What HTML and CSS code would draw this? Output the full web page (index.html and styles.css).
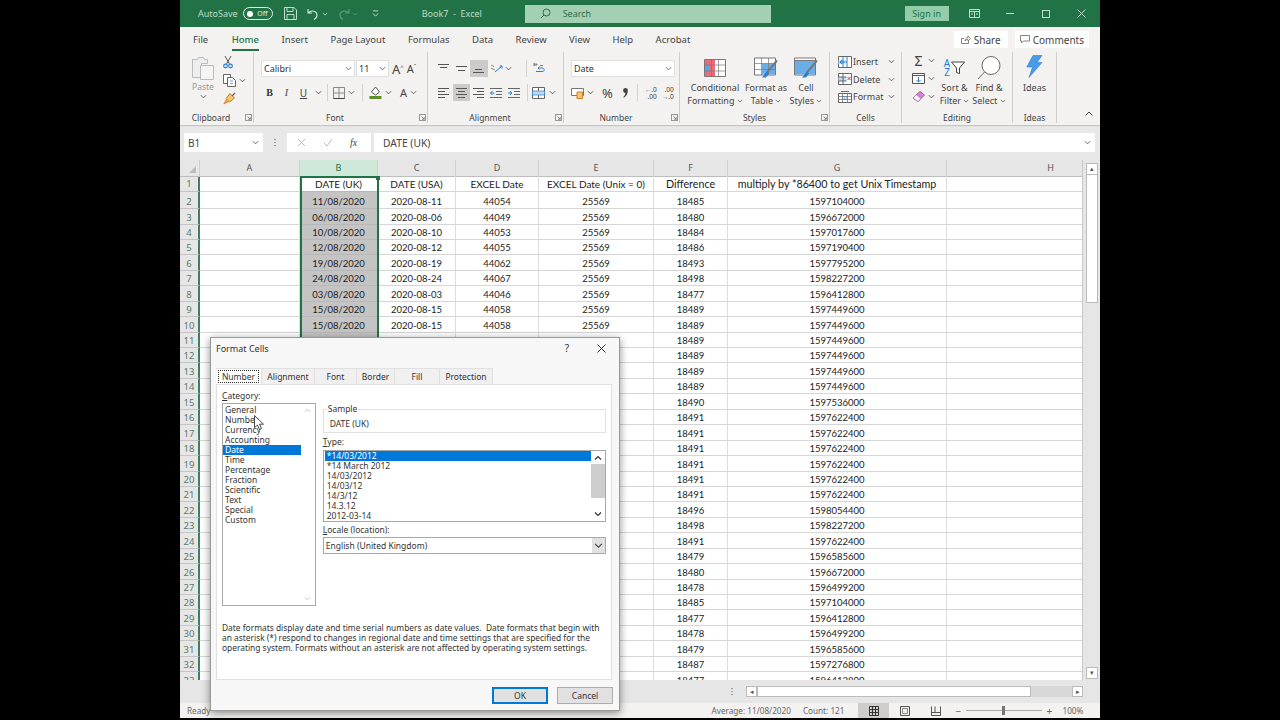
FILE: index.html
```html
<!DOCTYPE html>
<html lang="en">
  <head>
    <meta charset="UTF-8" />
    <title>Book7 - Excel</title>
    <link rel="stylesheet" href="styles.css">
  </head>
  <body>
    <svg class="defs">
      <symbol id="chev" viewBox="0 0 8 8"><path d="M1 2.500 4 5.500 7 2.500" fill="none" stroke="#555" stroke-width="1"/></symbol>
      <symbol id="launch" viewBox="0 0 8 8"><path d="M.5.500h7v7h-7z M3 3l3 3M6 3.500V6H3.500" fill="none" stroke="#666" stroke-width=".8"/></symbol>
    </svg>

    <div class="app">
      <!-- Title bar -->
      <div class="titlebar">
        <span class="autosave">AutoSave</span>
        <span class="toggle"><i></i>Off</span>
        <svg class="qa-save" width="13" height="13" viewBox="0 0 13 13"><path d="M.5.500h9.500l2.500 2.500v9.500h-12zM3 .5v4h6v-4M3 12.500v-5h7v5" fill="none" stroke="#bfe0cc"/></svg>
        <svg class="qa-undo" width="12" height="12" viewBox="0 0 12 12"><path d="M1 1v4h4M1 5c3-3.500 9-2 9 2 0 2-1 3.500-3 4.500" fill="none" stroke="#d4e9dc" stroke-width="1.100"/></svg>
        <svg class="qa-chev" width="6" height="6" viewBox="0 0 8 8"><path d="M1 2.500 4 5.500 7 2.500" fill="none" stroke="#d4e9dc"/></svg>
        <svg class="qa-redo" width="12" height="12" viewBox="0 0 12 12"><path d="M11 1v4h-4M11 5c-3-3.500-9-2-9 2 0 2 1 3.500 3 4.500" fill="none" stroke="#5f9c7b" stroke-width="1.100"/></svg>
        <svg class="qa-chev2" width="6" height="6" viewBox="0 0 8 8"><path d="M1 2.500 4 5.500 7 2.500" fill="none" stroke="#5f9c7b"/></svg>
        <svg class="qa-custom" width="7" height="7" viewBox="0 0 8 8"><path d="M1 1h6M1 4 4 7 7 4" fill="none" stroke="#d4e9dc"/></svg>
        <span class="doc-title">Book7 &nbsp;-&nbsp; Excel</span>
        <div class="search">
          <svg width="11" height="11" viewBox="0 0 11 11"><circle cx="6.500" cy="4.500" r="3.500" fill="none" stroke="#2c6e4b"/><path d="M4 7 1 10" stroke="#2c6e4b"/></svg>
          <span>Search</span>
        </div>
        <span class="signin">Sign in</span>
        <svg class="win-ribbon" width="11" height="9" viewBox="0 0 11 9"><path d="M.5.500h10v8h-10zM.5 2.500h10M5.500 2.500v6M2 5h2M7 5h2" fill="none" stroke="#bfe0cc"/></svg>
        <span class="win-min"></span>
        <span class="win-max"></span>
        <svg class="win-close" width="9" height="9" viewBox="0 0 9 9"><path d="M.5.500l8 8M8.500.500l-8 8" stroke="#bfe0cc"/></svg>
      </div>

      <!-- Ribbon tabs -->
      <div class="tabs">
        <span class="tab-file">File</span>
        <span class="tab-on">Home</span>
        <span>Insert</span>
        <span>Page Layout</span>
        <span>Formulas</span>
        <span>Data</span>
        <span>Review</span>
        <span>View</span>
        <span>Help</span>
        <span>Acrobat</span>
        <div class="tab-actions">
          <span class="share">
            <svg width="10" height="9" viewBox="0 0 10 9"><path d="M3 3.500H.5v5h7V6M4 6c0-2 1.500-3.500 3-3.500V1l2.500 2.500L7 6V4.500C5.500 4.500 4.500 5 4 6z" fill="none" stroke="#666" stroke-width=".8"/></svg>
            Share
          </span>
          <span class="comments">
            <svg width="10" height="9" viewBox="0 0 10 9"><path d="M.5.500h9v5.500h-6l-2 2v-2h-1z" fill="none" stroke="#666" stroke-width=".8"/></svg>
            Comments
          </span>
        </div>
      </div>

      <!-- Ribbon -->
      <div class="ribbon">
        <div class="group g-clip">
          <div class="group-body clip-body">
            <div class="paste">
              <svg width="24" height="25" viewBox="0 0 24 25"><path d="M1.500 4.500h5l1-2h5l1 2h3v4h-6v14h-9z" fill="#eee" stroke="#bbb"/><path d="M9.500 10.500h13v14h-13z" fill="#f4f4f4" stroke="#bbb"/></svg>
              <span>Paste</span>
              <svg class="caret" width="7" height="7"><use href="#chev"/></svg>
            </div>
            <div class="clip-tools">
              <svg width="10" height="14" viewBox="0 0 10 14"><path d="M2 1l4.500 8M8 1 3.500 9" stroke="#555"/><circle cx="2.500" cy="11" r="1.800" fill="none" stroke="#2b7cd3" stroke-width="1.200"/><circle cx="7.500" cy="11" r="1.800" fill="none" stroke="#2b7cd3" stroke-width="1.200"/></svg>
              <div class="tool-line">
                <svg width="13" height="13" viewBox="0 0 13 13"><path d="M.5.500h7v9h-7z" fill="#fff" stroke="#666"/><path d="M4.500 3.500h5l3 3v6h-8z" fill="#fff" stroke="#666"/><path d="M7 7h3M7 9.500h3" stroke="#2b7cd3" stroke-width=".7"/></svg>
                <svg class="caret" width="7" height="7"><use href="#chev"/></svg>
              </div>
              <svg width="13" height="13" viewBox="0 0 13 13"><path d="M7 1.500 11.500 6 6.500 10 3 6.500z" fill="#f6c667" stroke="#d27a1d"/><path d="M3.500 7 .8 12l5-2.500" fill="#f3a63b" stroke="#d27a1d" stroke-width=".7"/><path d="M9 4l3-3" stroke="#666" stroke-width="1.300"/></svg>
            </div>
          </div>
          <div class="group-foot"><span></span><span>Clipboard</span><svg class="launch" width="7" height="7"><use href="#launch"/></svg></div>
        </div>

        <div class="group g-font">
          <div class="group-body">
            <div class="rrow">
              <span class="field f-name">Calibri<svg width="7" height="7"><use href="#chev"/></svg></span>
              <span class="field f-size">11<svg width="7" height="7"><use href="#chev"/></svg></span>
              <span class="grow-a">A<sup>^</sup></span>
              <span class="shrink-a">A<sup>ˇ</sup></span>
            </div>
            <div class="rrow row2 font-row2">
              <b class="t-b">B</b>
              <i class="t-i">I</i>
              <u class="t-u">U</u>
              <svg class="caret" width="7" height="7"><use href="#chev"/></svg>
              <span class="vsep"></span>
              <svg width="12" height="12" viewBox="0 0 12 12"><path d="M.5.500h11v11h-11zM6 .5v11M.5 6h11" fill="none" stroke="#888"/><path d="M.5 11.500h11" stroke="#444"/></svg>
              <svg class="caret" width="7" height="7"><use href="#chev"/></svg>
              <span class="vsep sep-fill"></span>
              <svg width="13" height="13" viewBox="0 0 13 13"><path d="M6.500 1 10.500 6 6.500 9 2.500 6z" fill="#fff" stroke="#555"/><path d="M.5 10h12v3H.5z" fill="#5e8f2f"/></svg>
              <svg class="caret" width="7" height="7"><use href="#chev"/></svg>
              <span class="font-color">A</span>
              <svg class="caret" width="7" height="7"><use href="#chev"/></svg>
            </div>
          </div>
          <div class="group-foot"><span></span><span>Font</span><svg class="launch" width="7" height="7"><use href="#launch"/></svg></div>
        </div>

        <div class="group g-align">
          <div class="group-body">
            <div class="rrow">
              <span class="tool"><svg width="11" height="11" viewBox="0 0 11 11"><path d="M0 1.500h11M2 4.500h7" stroke="#555"/></svg></span>
              <span class="tool"><svg width="11" height="11" viewBox="0 0 11 11"><path d="M0 3.500h11M2 7.500h7" stroke="#555"/></svg></span>
              <span class="tool on"><svg width="11" height="11" viewBox="0 0 11 11"><path d="M2 6.500h7M0 9.500h11" stroke="#555"/></svg></span>
              <span class="tool"><svg width="13" height="12" viewBox="0 0 13 12"><path d="M1 2l3 1.500M1 5l4 2" stroke="#888"/><path d="M5 9 12 3M9.500 3H12v2.500" fill="none" stroke="#2b7cd3"/></svg></span>
              <svg class="caret" width="7" height="7"><use href="#chev"/></svg>
              <span class="vsep sep-wrap"></span>
              <span class="tool wrap"><svg width="12" height="13" viewBox="0 0 12 13"><path d="M3 9.500h6c3 0 3-3.500 0-3.500H5M6.500 4.500 5 6l1.500 1.500" fill="none" stroke="#2b7cd3"/><path d="M1 4V1M1 3h3V2H1M7 3.500h3" stroke="#666" stroke-width=".8" fill="none"/></svg></span>
            </div>
            <div class="rrow row2">
              <span class="tool"><svg width="11" height="11" viewBox="0 0 11 11"><path d="M0 1.500h11M0 4.500h7M0 7.500h11M0 10.500h7" stroke="#555"/></svg></span>
              <span class="tool on"><svg width="11" height="11" viewBox="0 0 11 11"><path d="M0 1.500h11M2 4.500h7M0 7.500h11M2 10.500h7" stroke="#555"/></svg></span>
              <span class="tool"><svg width="11" height="11" viewBox="0 0 11 11"><path d="M0 1.500h11M4 4.500h7M0 7.500h11M4 10.500h7" stroke="#555"/></svg></span>
              <span class="tool"><svg width="12" height="11" viewBox="0 0 12 11"><path d="M0 1.500h12M6 4.500h6M6 7.500h6M0 10.500h12" stroke="#666"/><path d="M4.500 6H.5M2.500 4 .5 6l2 2" fill="none" stroke="#2b7cd3"/></svg></span>
              <span class="tool"><svg width="12" height="11" viewBox="0 0 12 11"><path d="M0 1.500h12M6 4.500h6M6 7.500h6M0 10.500h12" stroke="#666"/><path d="M0 6h4M2 4l2 2-2 2" fill="none" stroke="#2b7cd3"/></svg></span>
              <span class="vsep sep-merge"></span>
              <span class="tool"><svg width="13" height="12" viewBox="0 0 13 12"><path d="M.5.500h12v11H.5z" fill="#fff" stroke="#666"/><path d="M.5 4h12v4H.5z" fill="#bcdcf4" stroke="#2b7cd3" stroke-width=".7"/><path d="M6.500.5v3.500M6.500 8v3.500" stroke="#666"/></svg></span>
              <svg class="caret merge-caret" width="7" height="7"><use href="#chev"/></svg>
            </div>
          </div>
          <div class="group-foot"><span></span><span>Alignment</span><svg class="launch" width="7" height="7"><use href="#launch"/></svg></div>
        </div>

        <div class="group g-number">
          <div class="group-body">
            <div class="rrow">
              <span class="field f-format">Date<svg width="7" height="7"><use href="#chev"/></svg></span>
            </div>
            <div class="rrow row2 num-row2">
              <svg width="13" height="12" viewBox="0 0 13 12"><path d="M.5 1.500h12v7H.5z" fill="#fff" stroke="#777"/><path d="M6 5h5.500v6.500H6z" fill="#f5c77e" stroke="#d27a1d"/></svg>
              <svg class="caret" width="7" height="7"><use href="#chev"/></svg>
              <span class="t-pct">%</span>
              <svg class="t-comma" width="5" height="10" viewBox="0 0 5 10"><path d="M2.500 0a2.300 2.300 0 0 1 2.300 2.500C4.800 6 3 8.500.8 9.800L.3 9C1.500 8 2.300 6.500 2.400 5 1 5 .2 3.800.2 2.500A2.300 2.300 0 0 1 2.500 0z" fill="#444"/></svg>
              <span class="vsep"></span>
              <span class="dec"><em>←</em>.0<br>.00</span>
              <span class="dec dec-2">.00<br><em>→</em>.0</span>
            </div>
          </div>
          <div class="group-foot"><span></span><span>Number</span><svg class="launch" width="7" height="7"><use href="#launch"/></svg></div>
        </div>

        <div class="group g-styles">
          <div class="group-body styles-body">
            <div class="big b-cond">
              <svg width="22" height="18" viewBox="0 0 22 18"><path d="M.5.500h21v17H.5z" fill="#fff" stroke="#777"/><path d="M1 1h10v5H1zM1 12h10v5H1z" fill="#ee6a7a"/><path d="M1 6h5v6H1z" fill="#5aa5e6"/><path d="M6 6h5v6H6z" fill="#ee6a7a"/><path d="M7.500.5v17M14.500.5v17M.5 6h21M.5 12h21" stroke="#777" stroke-width=".7"/></svg>
              <span>Conditional<br>Formatting <svg width="6" height="6"><use href="#chev"/></svg></span>
            </div>
            <div class="big b-table">
              <svg width="24" height="21" viewBox="0 0 24 21"><path d="M.5.500h21v17H.5z" fill="#fff" stroke="#777"/><path d="M8 6h13v11H8z" fill="#6aaee8"/><path d="M7.500.5v17M14.500.5v17M.5 6h21M.5 12h21" stroke="#777" stroke-width=".7"/><path d="M23 3 13 15" stroke="#777" stroke-width="2"/><path d="M13 14l2 2-3 4-4 0z" fill="#2b7cd3"/></svg>
              <span>Format as<br>Table <svg width="6" height="6"><use href="#chev"/></svg></span>
            </div>
            <div class="big b-cell">
              <svg width="24" height="21" viewBox="0 0 24 21"><path d="M.5.500h21v17H.5z" fill="#fff" stroke="#777"/><path d="M1 3h20v14H1z" fill="#6aaee8"/><path d="M.5 3h21" stroke="#777"/><path d="M23 3 13 15" stroke="#777" stroke-width="2"/><path d="M13 14l2 2-3 4-4 0z" fill="#2b7cd3"/></svg>
              <span>Cell<br>Styles <svg width="6" height="6"><use href="#chev"/></svg></span>
            </div>
          </div>
          <div class="group-foot foot-center"><span></span><span>Styles</span><svg class="launch" width="7" height="7"><use href="#launch"/></svg></div>
        </div>

        <div class="group g-cells">
          <div class="group-body cells-body">
            <div class="cell-line"><svg width="14" height="12" viewBox="0 0 14 12"><path d="M.5.500h13v11H.5z" fill="#fff" stroke="#666"/><path d="M.5 4h6v4h-6z" fill="#bcdcf4"/><path d="M9 6H2M4 4 2 6l2 2M5 .5v11M9 .5v11" fill="none" stroke="#2b7cd3"/></svg>Insert<svg class="caret c-ins" width="7" height="7"><use href="#chev"/></svg></div>
            <div class="cell-line"><svg width="14" height="12" viewBox="0 0 14 12"><path d="M.5.500h13v11H.5z" fill="#fff" stroke="#666"/><path d="M.5 4h8v4h-8z" fill="#bcdcf4"/><path d="M5 .5v11M.5 4h8M.5 8h8" stroke="#666" fill="none"/><path d="M9.500 4l3 3M12.500 4l-3 3" stroke="#d9344a"/></svg>Delete<svg class="caret c-del" width="7" height="7"><use href="#chev"/></svg></div>
            <div class="cell-line"><svg width="14" height="12" viewBox="0 0 14 12"><path d="M.5 2.500h13v9H.5z" fill="#fff" stroke="#666"/><path d="M4 5h6v4H4z" fill="#bcdcf4"/><path d="M4.500 2.500v9M9.500 2.500v9M.5 5.500h13M.5 8.500h13" stroke="#666" stroke-width=".7"/><path d="M3 .5h8" stroke="#2b7cd3"/></svg>Format<svg class="caret" width="7" height="7"><use href="#chev"/></svg></div>
          </div>
          <div class="group-foot foot-plain">Cells</div>
        </div>

        <div class="group g-edit">
          <div class="group-body edit-body">
            <div class="edit-left">
              <div class="tool-line"><span class="sigma">Σ</span><svg class="caret" width="7" height="7"><use href="#chev"/></svg></div>
              <div class="tool-line"><svg width="13" height="11" viewBox="0 0 13 11"><path d="M.5.500h12v10H.5z" fill="#fff" stroke="#555"/><path d="M.5 2.500h12" stroke="#555"/><path d="M6.500 4v5M4.500 7l2 2 2-2" fill="none" stroke="#2b7cd3"/></svg><svg class="caret" width="7" height="7"><use href="#chev"/></svg></div>
              <div class="tool-line"><svg width="13" height="11" viewBox="0 0 13 11"><path d="M8 .5 12.500 4 6 10.500 1 7z" fill="#d884d8" stroke="#a653a6"/><path d="M4.500 3.500 9 7.500 6 10.500 1 7z" fill="#fff" stroke="#a653a6" stroke-width=".7"/></svg><svg class="caret" width="7" height="7"><use href="#chev"/></svg></div>
            </div>
            <div class="big b-sort">
              <div class="sort-ic">
                <span class="az">A<br>Z</span>
                <svg width="14" height="14" viewBox="0 0 14 14"><path d="M.5 1h13L8.500 7v5.500l-3-1V7z" fill="#fff" stroke="#444"/></svg>
              </div>
              <span>Sort &amp;<br>Filter <svg width="6" height="6"><use href="#chev"/></svg></span>
            </div>
            <div class="big b-find">
              <svg width="24" height="23" viewBox="0 0 24 23"><circle cx="14" cy="9" r="9" fill="#fff" stroke="#666"/><path d="M7.500 15.500 1 22.500" stroke="#666"/></svg>
              <span>Find &amp;<br>Select <svg width="6" height="6"><use href="#chev"/></svg></span>
            </div>
          </div>
          <div class="group-foot foot-plain">Editing</div>
        </div>

        <div class="group g-ideas">
          <div class="group-body ideas-body">
            <svg width="17" height="23" viewBox="0 0 17 23"><path d="M7 .5h9L11 7.500h5L3 22.500 6.500 12H.8z" fill="#4a9be8" stroke="#2b7cd3" stroke-width=".6"/></svg>
            <span>Ideas</span>
          </div>
          <div class="group-foot foot-plain">Ideas</div>
        </div>

        <svg class="collapse" width="8" height="6" viewBox="0 0 8 6"><path d="M.5 4.500 4 1l3.500 3.500" fill="none" stroke="#444"/></svg>
      </div>

      <!-- Formula bar -->
      <div class="formula">
        <span class="namebox">B1<svg width="7" height="7"><use href="#chev"/></svg></span>
        <span class="grip"></span>
        <span class="fx-box">
          <svg width="9" height="9" viewBox="0 0 9 9"><path d="M1 1l7 7M8 1 1 8" stroke="#bbb"/></svg>
          <svg width="10" height="9" viewBox="0 0 10 9"><path d="M1 5l3 3 5-7" fill="none" stroke="#bbb"/></svg>
          <em>fx</em>
        </span>
        <span class="fx-input">DATE (UK)<svg width="7" height="7"><use href="#chev"/></svg></span>
      </div>

      <!-- Sheet -->
      <div class="sheet-wrap">
        <div class="grid">
          <div class="cols"><span class="corner"></span><span>A</span><span class="col-on">B</span><span>C</span><span>D</span><span>E</span><span>F</span><span>G</span><span>H</span></div>
          <div class="row row-head"><span>1</span><span></span><span>DATE (UK)</span><span>DATE (USA)</span><span>EXCEL Date</span><span>EXCEL Date (Unix = 0)</span><span>Difference</span><span>multiply by *86400 to get Unix Timestamp</span><span></span></div>
          <div class="row row-tall"><span>2</span><span></span><span>11/08/2020</span><span>2020-08-11</span><span>44054</span><span>25569</span><span>18485</span><span>1597104000</span><span></span></div>
          <div class="row"><span>3</span><span></span><span>06/08/2020</span><span>2020-08-06</span><span>44049</span><span>25569</span><span>18480</span><span>1596672000</span><span></span></div>
          <div class="row"><span>4</span><span></span><span>10/08/2020</span><span>2020-08-10</span><span>44053</span><span>25569</span><span>18484</span><span>1597017600</span><span></span></div>
          <div class="row"><span>5</span><span></span><span>12/08/2020</span><span>2020-08-12</span><span>44055</span><span>25569</span><span>18486</span><span>1597190400</span><span></span></div>
          <div class="row"><span>6</span><span></span><span>19/08/2020</span><span>2020-08-19</span><span>44062</span><span>25569</span><span>18493</span><span>1597795200</span><span></span></div>
          <div class="row"><span>7</span><span></span><span>24/08/2020</span><span>2020-08-24</span><span>44067</span><span>25569</span><span>18498</span><span>1598227200</span><span></span></div>
          <div class="row"><span>8</span><span></span><span>03/08/2020</span><span>2020-08-03</span><span>44046</span><span>25569</span><span>18477</span><span>1596412800</span><span></span></div>
          <div class="row"><span>9</span><span></span><span>15/08/2020</span><span>2020-08-15</span><span>44058</span><span>25569</span><span>18489</span><span>1597449600</span><span></span></div>
          <div class="row"><span>10</span><span></span><span>15/08/2020</span><span>2020-08-15</span><span>44058</span><span>25569</span><span>18489</span><span>1597449600</span><span></span></div>
          <div class="row"><span>11</span><span></span><span>15/08/2020</span><span>2020-08-15</span><span>44058</span><span>25569</span><span>18489</span><span>1597449600</span><span></span></div>
          <div class="row"><span>12</span><span></span><span>15/08/2020</span><span>2020-08-15</span><span>44058</span><span>25569</span><span>18489</span><span>1597449600</span><span></span></div>
          <div class="row"><span>13</span><span></span><span>15/08/2020</span><span>2020-08-15</span><span>44058</span><span>25569</span><span>18489</span><span>1597449600</span><span></span></div>
          <div class="row"><span>14</span><span></span><span>15/08/2020</span><span>2020-08-15</span><span>44058</span><span>25569</span><span>18489</span><span>1597449600</span><span></span></div>
          <div class="row"><span>15</span><span></span><span>16/08/2020</span><span>2020-08-16</span><span>44059</span><span>25569</span><span>18490</span><span>1597536000</span><span></span></div>
          <div class="row"><span>16</span><span></span><span>17/08/2020</span><span>2020-08-17</span><span>44060</span><span>25569</span><span>18491</span><span>1597622400</span><span></span></div>
          <div class="row"><span>17</span><span></span><span>17/08/2020</span><span>2020-08-17</span><span>44060</span><span>25569</span><span>18491</span><span>1597622400</span><span></span></div>
          <div class="row"><span>18</span><span></span><span>17/08/2020</span><span>2020-08-17</span><span>44060</span><span>25569</span><span>18491</span><span>1597622400</span><span></span></div>
          <div class="row"><span>19</span><span></span><span>17/08/2020</span><span>2020-08-17</span><span>44060</span><span>25569</span><span>18491</span><span>1597622400</span><span></span></div>
          <div class="row"><span>20</span><span></span><span>17/08/2020</span><span>2020-08-17</span><span>44060</span><span>25569</span><span>18491</span><span>1597622400</span><span></span></div>
          <div class="row"><span>21</span><span></span><span>17/08/2020</span><span>2020-08-17</span><span>44060</span><span>25569</span><span>18491</span><span>1597622400</span><span></span></div>
          <div class="row"><span>22</span><span></span><span>22/08/2020</span><span>2020-08-22</span><span>44065</span><span>25569</span><span>18496</span><span>1598054400</span><span></span></div>
          <div class="row"><span>23</span><span></span><span>24/08/2020</span><span>2020-08-24</span><span>44067</span><span>25569</span><span>18498</span><span>1598227200</span><span></span></div>
          <div class="row"><span>24</span><span></span><span>17/08/2020</span><span>2020-08-17</span><span>44060</span><span>25569</span><span>18491</span><span>1597622400</span><span></span></div>
          <div class="row"><span>25</span><span></span><span>05/08/2020</span><span>2020-08-05</span><span>44048</span><span>25569</span><span>18479</span><span>1596585600</span><span></span></div>
          <div class="row"><span>26</span><span></span><span>06/08/2020</span><span>2020-08-06</span><span>44049</span><span>25569</span><span>18480</span><span>1596672000</span><span></span></div>
          <div class="row"><span>27</span><span></span><span>04/08/2020</span><span>2020-08-04</span><span>44047</span><span>25569</span><span>18478</span><span>1596499200</span><span></span></div>
          <div class="row"><span>28</span><span></span><span>11/08/2020</span><span>2020-08-11</span><span>44054</span><span>25569</span><span>18485</span><span>1597104000</span><span></span></div>
          <div class="row"><span>29</span><span></span><span>03/08/2020</span><span>2020-08-03</span><span>44046</span><span>25569</span><span>18477</span><span>1596412800</span><span></span></div>
          <div class="row"><span>30</span><span></span><span>04/08/2020</span><span>2020-08-04</span><span>44047</span><span>25569</span><span>18478</span><span>1596499200</span><span></span></div>
          <div class="row"><span>31</span><span></span><span>05/08/2020</span><span>2020-08-05</span><span>44048</span><span>25569</span><span>18479</span><span>1596585600</span><span></span></div>
          <div class="row"><span>32</span><span></span><span>13/08/2020</span><span>2020-08-13</span><span>44056</span><span>25569</span><span>18487</span><span>1597276800</span><span></span></div>
          <div class="row"><span>33</span><span></span><span>03/08/2020</span><span>2020-08-03</span><span>44046</span><span>25569</span><span>18477</span><span>1596412800</span><span></span></div>
          <div class="sel-box"><i></i></div>
        </div>
        <div class="vscroll">
          <span class="sb-btn">▴</span>
          <span class="sb-thumb"></span>
          <span class="sb-btn sb-down">▾</span>
        </div>
      </div>

      <!-- Sheet tabs strip with horizontal scrollbar -->
      <div class="tabstrip">
        <span class="grip"></span>
        <div class="hscroll">
          <span class="hb">◂</span>
          <span class="h-thumb"></span>
          <span class="hb hb-right">▸</span>
        </div>
      </div>

      <!-- Status bar -->
      <div class="status">
        <span class="ready">Ready</span>
        <span class="avg">Average: 11/08/2020</span>
        <span class="count">Count: 121</span>
        <span class="view view-on"><svg width="10" height="10" viewBox="0 0 10 10"><path d="M.5.500h9v9h-9zM3.500.5v9M6.500.5v9M.5 3.500h9M.5 6.500h9" fill="none" stroke="#333"/></svg></span>
        <span class="view"><svg width="10" height="10" viewBox="0 0 10 10"><path d="M.5.500h9v9h-9z" fill="none" stroke="#555"/><path d="M2.500 2.500h5v5h-5z" fill="none" stroke="#888"/></svg></span>
        <span class="view"><svg width="10" height="10" viewBox="0 0 10 10"><path d="M.5.500v9h9v-9M.5 6.500h9M4 .5v6" fill="none" stroke="#555"/></svg></span>
        <span class="zoom-btn">−</span>
        <span class="slider"><i></i></span>
        <span class="zoom-btn">+</span>
        <span class="zoom-val">100%</span>
      </div>

      <!-- Format Cells dialog -->
      <div class="dialog">
        <div class="dlg-title">
          <span>Format Cells</span>
          <span class="dlg-help">?</span>
          <svg width="9" height="9" viewBox="0 0 9 9"><path d="M.5.500l8 8M8.500.500l-8 8" stroke="#333"/></svg>
        </div>
        <div class="dlg-tabs">
          <span class="dlg-tab dlg-tab-on"><b>Number</b></span>
          <span class="dlg-tab t-w1">Alignment</span>
          <span class="dlg-tab t-w2">Font</span>
          <span class="dlg-tab t-w3">Border</span>
          <span class="dlg-tab t-w4">Fill</span>
          <span class="dlg-tab t-w5">Protection</span>
        </div>
        <div class="dlg-panel">
          <div class="dlg-cols">
            <div class="cat-col">
              <label><u>C</u>ategory:</label>
              <div class="cat-list">
                <div class="cat-items">
                  <span>General</span>
                  <span>Number</span>
                  <span>Currency</span>
                  <span>Accounting</span>
                  <span class="picked">Date</span>
                  <span>Time</span>
                  <span>Percentage</span>
                  <span>Fraction</span>
                  <span>Scientific</span>
                  <span>Text</span>
                  <span>Special</span>
                  <span>Custom</span>
                </div>
                <div class="cat-scroll">
                  <svg width="7" height="7" viewBox="0 0 8 8"><path d="M1 5.500 4 2.500 7 5.500" fill="none" stroke="#bbb"/></svg>
                  <svg width="7" height="7" viewBox="0 0 8 8"><path d="M1 2.500 4 5.500 7 2.500" fill="none" stroke="#bbb"/></svg>
                </div>
              </div>
            </div>
            <div class="opt-col">
              <div class="sample">
                <span class="sample-legend">Sample</span>
                <span class="sample-val">DATE (UK)</span>
              </div>
              <label class="type-label"><u>T</u>ype:</label>
              <div class="type-list">
                <div class="type-items">
                  <span class="picked">*14/03/2012</span>
                  <span>*14 March 2012</span>
                  <span>14/03/2012</span>
                  <span>14/03/12</span>
                  <span>14/3/12</span>
                  <span>14.3.12</span>
                  <span>2012-03-14</span>
                </div>
                <div class="type-scroll">
                  <svg width="8" height="8" viewBox="0 0 8 8"><path d="M1 5.500 4 2.500 7 5.500" fill="none" stroke="#333" stroke-width="1.200"/></svg>
                  <span class="type-thumb"></span>
                  <svg width="8" height="8" viewBox="0 0 8 8"><path d="M1 2.500 4 5.500 7 2.500" fill="none" stroke="#333" stroke-width="1.200"/></svg>
                </div>
              </div>
              <label class="locale-label"><u>L</u>ocale (location):</label>
              <div class="locale">
                <span>English (United Kingdom)</span>
                <span class="locale-btn"><svg width="9" height="9" viewBox="0 0 8 8"><path d="M1 2.500 4 5.500 7 2.500" fill="none" stroke="#444"/></svg></span>
              </div>
            </div>
          </div>
          <p class="dlg-note">Date formats display date and time serial numbers as date values.&nbsp; Date formats that begin with<br>an asterisk (*) respond to changes in regional date and time settings that are specified for the<br>operating system. Formats without an asterisk are not affected by operating system settings.</p>
        </div>
        <div class="dlg-buttons">
          <button class="btn btn-ok">OK</button>
          <button class="btn">Cancel</button>
        </div>
      </div>

      <svg class="cursor" width="10" height="15" viewBox="0 0 10 15"><path d="M.5.500v12l3-2.500 2 4.500 2-1-2-4.300h4z" fill="#fff" stroke="#222" stroke-width=".8"/></svg>
    </div>
  </body>
</html>
```

FILE: styles.css
```css
* {
  box-sizing: border-box;
}

body {
  margin: 0;
  background-color: #000;
  font-family: "Noto Sans", sans-serif;
  font-size: 9px;
  color: #444;
}

.defs {
  display: none;
}

svg {
  flex: none;
}

.app {
  position: relative;
  width: 920px;
  height: 718px;
  margin: 0 auto;
  background-color: #f3f2f1;
  overflow: hidden;
}

/* Title bar */
.titlebar {
  display: flex;
  align-items: center;
  height: 27px;
  padding-left: 18px;
  background-color: #217346;
  color: #bcdcc8;
}

.toggle {
  display: flex;
  align-items: center;
  justify-content: space-between;
  width: 30px;
  height: 13px;
  margin-left: 5px;
  padding: 0 4px 0 3px;
  border: 1px solid #e4f1e9;
  border-radius: 7px;
  font-size: 7px;
  color: #e4f1e9;
}

.toggle i {
  width: 6px;
  height: 6px;
  border-radius: 50%;
  background-color: #fff;
}

.qa-save { margin-left: 11px; }
.qa-undo { margin-left: 10px; }
.qa-chev { margin-left: 3px; }
.qa-redo { margin-left: 10px; }
.qa-chev2 { margin-left: 2px; }
.qa-custom { margin-left: 14px; }

.doc-title {
  width: 70px;
  margin-left: 43px;
  white-space: nowrap;
}

.search {
  display: flex;
  align-items: center;
  gap: 12px;
  width: 246px;
  height: 18px;
  margin-left: 33px;
  padding-left: 15px;
  background-color: #a3cfb2;
  color: #2c6e4b;
}

.signin {
  width: 44px;
  height: 15px;
  margin-left: 134px;
  background-color: #94cba9;
  color: #217346;
  line-height: 15px;
  text-align: center;
}

.win-ribbon { margin-left: 20px; }

.win-min {
  width: 8px;
  height: 1px;
  margin-left: 26px;
  background-color: #bfe0cc;
}

.win-max {
  width: 8px;
  height: 8px;
  margin-left: 28px;
  border: 1px solid #bfe0cc;
}

.win-close { margin-left: 27px; }

/* Ribbon tabs */
.tabs {
  display: flex;
  align-items: center;
  gap: 22.5px;
  height: 25px;
  padding-left: 13px;
  font-size: 9.5px;
}

.tab-file {
  margin-right: 1px;
}

.tab-on {
  position: relative;
  color: #217346;
  font-weight: 500;
}

.tab-on::after {
  content: "";
  position: absolute;
  left: 0;
  right: 0;
  top: 16px;
  height: 2px;
  background-color: #217346;
}

.tab-actions {
  display: flex;
  gap: 7px;
  margin-left: auto;
  margin-right: 11px;
  font-size: 10px;
}

.share,
.comments {
  display: flex;
  align-items: center;
  gap: 3px;
  height: 17px;
  background-color: #fff;
}

.share { padding: 0 7px; }
.comments { padding: 0 5px; }

/* Ribbon */
.ribbon {
  position: relative;
  display: flex;
  height: 73px;
  box-shadow: 0 1px 1px rgba(0, 0, 0, 0.15);
  z-index: 1;
}

.group {
  display: flex;
  flex-direction: column;
  height: 71px;
  border-right: 1px solid #cfcdcb;
}

.g-clip { width: 74px; }
.g-font { width: 174px; }
.g-align { width: 136px; }
.g-number { width: 116px; }
.g-styles { width: 150px; }
.g-cells { width: 72px; }
.g-edit { width: 111px; }
.g-ideas { width: 44px; }

.group-body {
  flex: none;
  height: 60px;
  padding: 8px 0 0 7px;
}

.group-foot {
  display: grid;
  grid-template-columns: 1fr auto 1fr;
  align-items: center;
  height: 12px;
  text-align: center;
  font-size: 8.5px;
}

.group-foot span:nth-child(2) {
  margin-right: 11px;
}

.foot-center span:nth-child(2) {
  margin-right: 0;
}

.foot-plain {
  display: block;
  line-height: 12px;
}

.launch {
  justify-self: end;
  margin-right: 1px;
}

.rrow {
  display: flex;
  align-items: center;
  height: 17px;
}

.row2 {
  margin-top: 7px;
}

.tool {
  display: flex;
  align-items: center;
  justify-content: center;
  width: 17.5px;
  height: 17px;
}

.tool.on {
  background-color: #cbcbcb;
}

.tool-line {
  display: flex;
  align-items: center;
  gap: 3px;
}

.caret {
  display: block;
}

.vsep {
  width: 1px;
  height: 17px;
  background-color: #d5d3d1;
}

/* Clipboard */
.clip-body {
  display: flex;
  padding: 3px 0 0 11px;
}

.paste {
  display: flex;
  flex-direction: column;
  align-items: center;
  color: #999;
  font-size: 8.5px;
  line-height: 12px;
}

.paste svg:first-child {
  margin-bottom: 1px;
}

.clip-tools {
  display: flex;
  flex-direction: column;
  gap: 5px;
  margin-left: 8px;
}

/* Font */
.field {
  display: flex;
  align-items: center;
  justify-content: space-between;
  height: 17px;
  padding: 0 2px;
  background-color: #fff;
  border: 1px solid #e1dfdd;
  color: #333;
}

.f-name { width: 94px; }
.f-size { width: 33px; margin-left: 1px; }
.grow-a { margin-left: 3px; font-size: 13px; }
.shrink-a { margin-left: 3px; font-size: 11px; }
.grow-a sup, .shrink-a sup { font-size: 6px; }

.font-row2 b { width: 17px; font-size: 10px; color: #333; text-align: center; font-family: "Liberation Serif", serif; }
.font-row2 i { width: 17px; font-size: 10px; text-align: center; font-family: "Liberation Serif", serif; }
.font-row2 u { width: 17px; font-size: 10px; text-align: center; }
.font-row2 .vsep { margin: 0 5px; }
.font-row2 .sep-fill { margin: 0 6px 0 7px; }
.font-row2 .caret { margin-left: 3px; }
.font-color { margin-left: 8px; font-size: 11px; }

/* Alignment */
.sep-wrap { margin: 0 3px 0 14px; }
.sep-merge { margin: 0 2px 0 4px; }
.merge-caret { margin-left: 2px; }

/* Number */
.f-format { width: 104px; }

.num-row2 {
  gap: 3px;
}

.t-pct { margin-left: 5px; font-size: 13px; }
.t-comma { margin: 0 6px 0 7px; }

.dec {
  margin-left: 4px;
  font-size: 6.5px;
  line-height: 7px;
  text-align: right;
}

.dec-2 {
  margin-left: 2px;
}

.dec em {
  color: #2b7cd3;
  font-style: normal;
}

/* Styles, big buttons */
.big {
  display: flex;
  flex-direction: column;
  align-items: center;
  flex: none;
  line-height: 12.5px;
  text-align: center;
  white-space: nowrap;
}

.big span {
  display: block;
}

.big > svg,
.sort-ic {
  height: 24px;
  margin-bottom: 2px;
}

.styles-body {
  display: flex;
  padding: 4px 0 0 8px;
}

.b-cond { width: 54px; }
.b-table { width: 48px; }
.b-cell { width: 32px; }

/* Cells */
.cells-body {
  padding: 1px 0 0 8px;
}

.cell-line {
  display: flex;
  align-items: center;
  gap: 1px;
  height: 17.5px;
}

.cell-line .caret { margin-left: 3px; }
.cell-line .c-ins { margin-left: 9px; }
.cell-line .c-del { margin-left: 7px; }

/* Editing */
.edit-body {
  display: flex;
  padding: 1px 0 0 10px;
}

.edit-left {
  display: flex;
  flex-direction: column;
  gap: 2.5px;
  width: 28px;
}

.edit-left .tool-line {
  height: 15.5px;
}

.sigma {
  width: 13px;
  font-size: 14px;
  line-height: 15px;
  text-align: center;
}

.big.b-sort { width: 29px; margin-top: 3px; }
.big.b-find { width: 32px; margin: 3px 0 0 4px; }

.sort-ic {
  display: flex;
  align-items: center;
  gap: 1px;
}

.big .az {
  color: #2b7cd3;
  font-size: 10px;
  line-height: 9px;
}

/* Ideas */
.ideas-body {
  display: flex;
  flex-direction: column;
  align-items: center;
  gap: 3px;
  padding: 3px 0 0;
}

.collapse {
  position: absolute;
  right: 7px;
  bottom: 8px;
}

/* Formula bar */
.formula {
  display: flex;
  align-items: center;
  height: 35px;
  padding: 0 5px 0 4px;
  background-color: #e8e8e8;
  color: #444;
}

.namebox {
  display: flex;
  align-items: center;
  justify-content: space-between;
  width: 79px;
  height: 19px;
  padding: 0 4px;
  background-color: #fff;
  font-size: 10px;
}

.grip {
  flex: none;
  width: 2px;
  height: 9px;
  background-image: radial-gradient(circle, #999 0.8px, transparent 1px);
  background-size: 2px 3px;
}

.formula .grip {
  margin: 0 11px;
}

.fx-box {
  display: flex;
  align-items: center;
  gap: 17px;
  width: 84px;
  height: 19px;
  padding-left: 10px;
  background-color: #fff;
}

.fx-box em {
  font-family: "Liberation Serif", serif;
  font-size: 10px;
}

.fx-input {
  display: flex;
  align-items: center;
  justify-content: space-between;
  flex: 1;
  height: 19px;
  margin-left: 3px;
  padding: 0 4px 0 9px;
  background-color: #fff;
  font-size: 10.3px;
}

/* Sheet */
.sheet-wrap {
  display: flex;
  height: 520px;
  background-color: #e6e6e6;
}

.grid {
  position: relative;
  width: 903px;
  overflow: hidden;
  background-color: #fff;
  border-right: 1px solid #c8c8c8;
  font-family: Lato, sans-serif;
  font-size: 9.5px;
  color: #222;
}

.cols,
.row {
  display: grid;
  grid-template-columns: 20px 100px 78px 78px 83px 115px 74px 219px 208px;
}

.cols {
  height: 16px;
  background-color: #e6e6e6;
  color: #555;
  font-family: "Noto Sans", sans-serif;
  font-size: 9px;
  line-height: 16px;
  text-align: center;
}

.cols span {
  border-right: 1px solid #cfcfcf;
  border-bottom: 1px solid #bdbdbd;
}

.cols .col-on {
  background-color: #cfe8d9;
  color: #217346;
  border-bottom: none;
}

.corner {
  position: relative;
}

.corner::after {
  content: "";
  position: absolute;
  right: 3px;
  bottom: 3px;
  border-style: solid;
  border-width: 0 0 7px 7px;
  border-color: transparent transparent #bdbdbd transparent;
}

.row {
  height: 15.45px;
}

.row-head {
  height: 15.5px;
  font-size: 10px;
}

.row-tall {
  height: 17.6px;
}

.row span {
  display: flex;
  align-items: flex-end;
  justify-content: center;
  border-right: 1px solid #dcdcdc;
  border-bottom: 1px solid #d6d6d6;
  line-height: 12px;
  white-space: nowrap;
}

.row-head span {
  padding-bottom: 1px;
}

.row span:first-child {
  background-color: #e6e6e6;
  border-right: 2px solid #3f7f62;
  border-bottom-color: #c4c4c4;
  color: #5b7a6a;
  font-family: "Noto Sans", sans-serif;
  font-size: 9.5px;
}

.row span:nth-child(3) {
  background-color: #c4c4c4;
  border-bottom-color: #b8b8b8;
}

.row-head span:nth-child(3) {
  background-color: #fff;
}

.row-head span:nth-child(7),
.row-head span:nth-child(8) {
  font-size: 10.7px;
}

.sel-box {
  position: absolute;
  top: 16px;
  bottom: 0;
  left: 120px;
  width: 79px;
  border: 2px solid #217346;
  border-bottom: none;
}

.sel-box i {
  position: absolute;
  top: -2px;
  right: -3px;
  width: 4px;
  height: 4px;
  background-color: #217346;
}

.vscroll {
  display: flex;
  flex-direction: column;
  width: 17px;
  padding: 3px 2px 0 3px;
}

.sb-btn {
  height: 12px;
  background-color: #fff;
  border: 1px solid #bbb;
  color: #555;
  font-size: 7px;
  line-height: 10px;
  text-align: center;
}

.sb-thumb {
  height: 128px;
  background-color: #fff;
  border: 1px solid #bbb;
  border-top: none;
}

.sb-down {
  margin-top: auto;
  margin-bottom: 1px;
}

/* Sheet tabs strip */
.tabstrip {
  display: flex;
  align-items: center;
  height: 23px;
  padding-left: 551px;
  background-color: #e6e6e6;
  color: #999;
}

.hscroll {
  display: flex;
  width: 337px;
  height: 11px;
  margin-left: 13px;
  background-color: #d8d8d8;
}

.hb {
  width: 11px;
  background-color: #fff;
  border: 1px solid #bbb;
  color: #555;
  font-size: 7px;
  line-height: 9px;
  text-align: center;
}

.h-thumb {
  width: 274px;
  background-color: #fff;
  border: 1px solid #bbb;
}

.hb-right {
  margin-left: auto;
}

/* Status bar */
.status {
  display: flex;
  align-items: center;
  height: 15px;
  padding-left: 7px;
  background-color: #f3f2f1;
  color: #666;
  font-size: 8.2px;
}

.avg { margin-left: 501px; }
.count { margin-left: 12px; }

.view {
  display: flex;
  align-items: center;
  justify-content: center;
  width: 31px;
  height: 15px;
}

.view-on {
  margin-left: 14px;
  background-color: #cfcdcb;
}

.zoom-btn {
  width: 12px;
  font-size: 10px;
  text-align: center;
}

.view + .zoom-btn {
  margin-left: 1px;
}

.slider {
  position: relative;
  width: 76px;
  height: 1px;
  margin: 0 1px 0 2px;
  background-color: #aaa;
}

.slider i {
  position: absolute;
  left: 36px;
  top: -4px;
  width: 3px;
  height: 9px;
  background-color: #777;
}

.zoom-val { margin-left: 7px; }

/* Format Cells dialog */
.dialog {
  position: absolute;
  left: 30px;
  top: 337px;
  z-index: 5;
  width: 410px;
  height: 374px;
  padding: 0 7px 0 5px;
  background-color: #f7f7f7;
  border: 1px solid #999;
  box-shadow: 0 2px 8px rgba(0, 0, 0, 0.45);
  color: #333;
  font-size: 8.5px;
}

.dlg-title {
  display: flex;
  align-items: center;
  height: 20px;
  margin-bottom: 9px;
  font-size: 9px;
}

.dlg-title span:first-child {
  flex: 1;
}

.dlg-help {
  margin-right: 28px;
  font-size: 10px;
}

.dlg-title svg {
  margin-right: 6px;
}

.dlg-tabs {
  display: flex;
  height: 17px;
  padding-top: 1px;
}

.dlg-tab {
  display: flex;
  align-items: center;
  justify-content: center;
  height: 16px;
  background-color: #f0f0f0;
  border: 1px solid #e0e0e0;
  border-bottom: none;
  border-left: none;
}

.dlg-tab-on {
  width: 46px;
  background-color: #fff;
}

.dlg-tab-on b {
  padding: 0 3px;
  border: 1px dotted #333;
  font-weight: 400;
}

.t-w1 { width: 53px; }
.t-w2 { width: 42px; }
.t-w3 { width: 38px; }
.t-w4 { width: 45px; }
.t-w5 { width: 53px; }

.dlg-panel {
  height: 296px;
  padding: 5px 5px 0 5px;
  background-color: #fff;
  border: 1px solid #e0e0e0;
}

.dlg-cols {
  display: flex;
  gap: 7px;
}

.cat-col {
  width: 94px;
}

.cat-col label {
  display: block;
  height: 13px;
  line-height: 12px;
}

.cat-list {
  display: flex;
  height: 203px;
  border: 1px solid #a8a8a8;
}

.cat-items {
  flex: 1;
  padding-top: 1px;
}

.cat-items span,
.type-items span {
  display: block;
  height: 10px;
  padding-left: 2px;
  line-height: 10px;
  white-space: nowrap;
}

.picked {
  background-color: #0078d7;
  color: #fff;
}

.cat-scroll {
  display: flex;
  flex-direction: column;
  justify-content: space-between;
  align-items: center;
  width: 14px;
  padding: 3px 0;
}

.opt-col {
  width: 284px;
  padding-top: 19px;
}

.sample {
  position: relative;
  height: 24px;
  border: 1px solid #e0e0e0;
}

.sample-legend {
  position: absolute;
  left: 3px;
  top: -6px;
  padding: 0 1px;
  background-color: #fff;
  line-height: 10px;
}

.sample-val {
  position: absolute;
  left: 6px;
  top: 9px;
  line-height: 10px;
}

.type-label,
.locale-label {
  display: block;
  height: 17px;
  padding-top: 4px;
  line-height: 10px;
}

.type-list {
  display: flex;
  height: 72px;
  border: 1px solid #a8a8a8;
}

.type-items {
  flex: 1;
  padding-left: 1px;
}

.type-scroll {
  display: flex;
  flex-direction: column;
  align-items: center;
  width: 14px;
  padding-top: 3px;
}

.type-thumb {
  width: 14px;
  height: 34px;
  margin: 2px 0 12px;
  background-color: #cdcdcd;
}

.locale-label {
  height: 15px;
  padding-top: 3px;
}

.locale {
  display: flex;
  align-items: center;
  justify-content: space-between;
  height: 17px;
  padding-left: 2px;
  border: 1px solid #a8a8a8;
}

.locale-btn {
  display: flex;
  align-items: center;
  justify-content: center;
  width: 13px;
  height: 15px;
  background-color: #e1e1e1;
}

.dlg-note {
  margin: 17px 0 0;
  font-size: 8.4px;
  line-height: 10px;
  white-space: nowrap;
}

.dlg-buttons {
  display: flex;
  justify-content: flex-end;
  gap: 9px;
  margin-right: -1px;
  padding: 7px 0 0;
}

.btn {
  width: 56px;
  height: 17px;
  padding: 0;
  background-color: #e1e1e1;
  border: 1px solid #adadad;
  color: #333;
  font-family: "Noto Sans", sans-serif;
  font-size: 8.5px;
}

.btn-ok {
  border: 2px solid #0078d7;
}

.cursor {
  position: absolute;
  left: 74px;
  top: 415px;
  z-index: 6;
}
```
